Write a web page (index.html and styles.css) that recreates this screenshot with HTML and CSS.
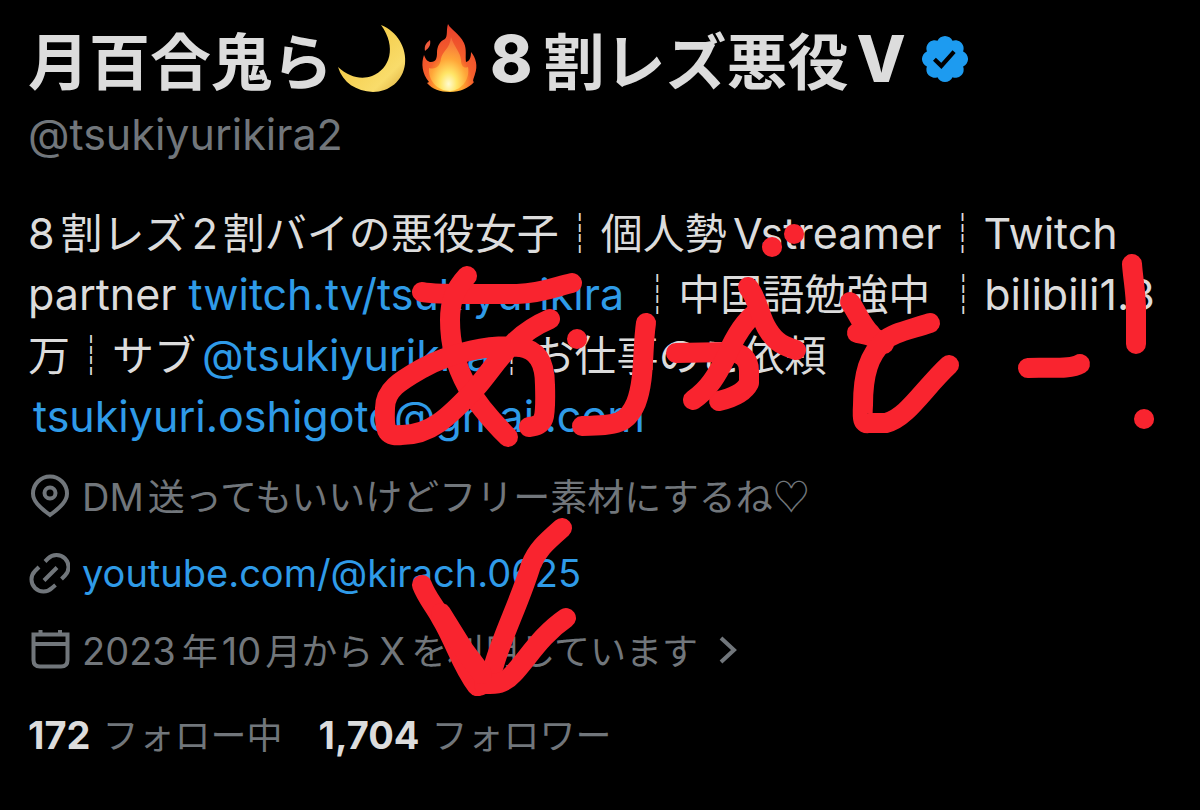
FILE: index.html
```html
<!DOCTYPE html>
<html lang="ja">
<head>
<meta charset="utf-8">
<meta name="viewport" content="width=device-width, initial-scale=1">
<title>月百合鬼ら (@tsukiyurikira2)</title>
<link rel="stylesheet" href="styles.css">
</head>
<body>
<main class="profile">
  <h1 class="name">
    <span>月百合鬼ら</span>
    <svg class="emoji moon" viewBox="0 0 72 72" role="img" aria-label="三日月">
      <defs><linearGradient id="moonFill" x1="0" y1="0" x2="1" y2="1"><stop offset="0.4" stop-color="#f5cf4f"/><stop offset="0.75" stop-color="#f9dc6b"/><stop offset="1" stop-color="#d9a838"/></linearGradient></defs>
      <path fill="url(#moonFill)" d="M45 2C61 8 71 25 69 41C67 58 53 69 37 69C20 68 7 60 2 44C13 54 25 57 36 53C54 46 61 24 45 2Z"/>
    </svg>
    <svg class="emoji fire" viewBox="0 0 58 72" role="img" aria-label="炎">
      <defs>
        <radialGradient id="fireFill" cx="0.5" cy="0.87" r="0.85"><stop offset="0" stop-color="#ffd84a"/><stop offset="0.3" stop-color="#ffa32e"/><stop offset="0.5" stop-color="#f5602c"/><stop offset="1" stop-color="#e8402c"/></radialGradient>
        <radialGradient id="fireCore" cx="0.5" cy="0.87" r="0.85"><stop offset="0" stop-color="#fffbd0"/><stop offset="0.25" stop-color="#ffe566"/><stop offset="0.55" stop-color="#ffa638"/><stop offset="1" stop-color="#f56a3c"/></radialGradient>
      </defs>
      <path fill="url(#fireFill)" d="M28 1C31 7 39 10 44 20C47 27 45 33 46 39C50 38 51 34 51 29C56 35 58 43 55 51C54 55 52 58 54 59C49 65 40 69 30 69C20 69 12 66 7 60L9 59C2 51 1 40 4 32C6 37 8 39 11 39C16 39 17 35 17 30C17 23 20 18 25 16C28 13 26 7 28 1Z"/>
      <path fill="#ee5a3c" d="M10 17C11 22 9 25 5 28C4 23 6 20 10 17Z"/>
      <path fill="url(#fireCore)" d="M31 14C34 24 40 28 41 37C41 43 44 46 48 44C50 55 43 67 30 68C17 68 8 57 9 45C16 47 20 43 21 36C22 28 30 26 31 14Z"/>
    </svg>
    <span class="digit">8</span>
    <span>割レズ悪役</span>
    <span class="initial">V</span>
    <svg class="badge" viewBox="0 0 22 22" role="img" aria-label="認証済み">
      <path fill="#1d9bf0" d="M20.396 11c-.018-.646-.215-1.275-.57-1.816-.354-.54-.852-.972-1.438-1.246.223-.607.27-1.264.14-1.897-.131-.634-.437-1.218-.882-1.687-.47-.445-1.053-.75-1.687-.882-.633-.13-1.29-.083-1.897.14-.273-.587-.704-1.086-1.245-1.44S11.647 1.62 11 1.604c-.646.017-1.273.213-1.813.568s-.969.854-1.24 1.44c-.608-.223-1.267-.272-1.902-.14-.635.13-1.22.436-1.69.882-.445.47-.749 1.055-.878 1.688-.13.633-.08 1.29.144 1.896-.587.274-1.087.705-1.443 1.245-.356.54-.555 1.17-.574 1.817.02.647.218 1.276.574 1.817.356.54.856.972 1.443 1.245-.224.606-.274 1.263-.144 1.896.13.634.433 1.218.877 1.688.47.443 1.054.747 1.687.878.633.132 1.29.084 1.897-.136.274.586.705 1.084 1.246 1.439.54.354 1.17.551 1.816.569.647-.016 1.276-.213 1.817-.567s.972-.854 1.245-1.44c.604.239 1.266.296 1.903.164.636-.132 1.22-.447 1.68-.907.46-.46.776-1.044.908-1.681s.075-1.299-.165-1.903c.586-.274 1.084-.705 1.439-1.246.354-.54.551-1.17.569-1.816z"/>
      <path fill="none" stroke="#000" stroke-width="1.7" d="M6.7 11.1l2.8 2.7L14.7 8"/>
    </svg>
  </h1>
  <p class="handle">@tsukiyurikira2</p>
  <p class="bio"><span class="latin lead">8</span>割レズ<span class="latin num">2</span>割バイの悪役女子┊個人勢<span class="latin word">Vstreamer</span>┊<span class="latin">Twitch</span><br><span class="latin">partner <a href="#">twitch.tv/tsukiyurikira</a> </span>┊中国語勉強中<span class="latin"> </span>┊<span class="latin">bilibili1.3</span><br>万┊サブ<a class="latin mention" href="#">@tsukiyurikira</a>┊お仕事のご依頼<br><a class="latin mail" href="#">tsukiyuri.oshigoto@gmail.com</a></p>
  <ul class="details">
    <li>
      <svg class="icon" viewBox="0 0 42 44" aria-hidden="true"><path d="M22 41C11 33 5 27 5 19.500a17 17 0 0 1 34 0C39 27 33 33 22 41Z"/><circle cx="22" cy="19" r="5.500"/></svg>
      <span class="place"><span class="latin dm">DM</span>送ってもいいけどフリー素材にするね♡</span>
    </li>
    <li>
      <svg class="icon" viewBox="0 0 42 44" aria-hidden="true"><path d="M17 10.500L20 7.500a12 12 0 0 1 17 17L33.500 28M27.500 34L24 37A12 12 0 0 1 7 20L11 16M16 29.500L29 16.500"/></svg>
      <a class="latin" href="#">youtube.com/@kirach.0625</a>
    </li>
    <li>
      <button class="joined" type="button">
        <svg class="icon" viewBox="0 0 42 44" aria-hidden="true"><path d="M5.500 6.500H39.500V32Q39.500 38.500 33 38.500H12Q5.500 38.500 5.500 32ZM5.500 16H39.500M12.500 2V7M32 2V7"/></svg>
        <span><span class="latin year">2023</span>年<span class="latin month">10</span>月から<span class="latin x">X</span>を利用しています</span>
        <svg class="chevron" viewBox="0 0 20 30" aria-hidden="true"><path d="M3 3L16 15L3 27"/></svg>
      </button>
    </li>
  </ul>
  <div class="counts">
    <a href="#"><strong>172</strong> <span>フォロー中</span></a>
    <a href="#"><strong>1,704</strong> <span>フォロワー</span></a>
  </div>
  <svg class="scribble" viewBox="0 0 1200 810" role="img" aria-label="手書き：ありがとー！">
    <path d="M422 292C435 295 475 294 517 294C545 293 557 286 572 283"/>
    <path d="M467 276C454 290 450 303 450 320C450 372 476 405 508 437"/>
    <path d="M550 319C510 336 497 364 476 388C448 418 430 435 402 435C388 436 384 434 385 408C385 390 400 381 421 369C451 352 492 344 520 347C538 350 545 363 545 385C546 420 545 425 529 427"/>
    <path d="M577 339h.1M646 323C642 350 645 380 636 403C627 424 618 425 582 426"/>
    <path d="M676 353L728 352C743 352 749 360 749 371V383C744 393 732 398 719 401"/>
    <path d="M693 400C709 389 717 375 726 357C735 336 744 321 757 312"/>
    <path d="M748 287C759 300 759 317 768 330C776 343 784 346 796 350M772 247h.1M794 234h.1"/>
    <path d="M850 302C857 312 862 326 871 334M857 333C868 335 876 337 884 344"/>
    <path d="M930 323C905 331 893 333 884 341C869 355 863 374 863 405C862 420 863 424 869 423L886 423C907 418 924 388 949 365"/>
    <path d="M1028 368C1047 367 1070 370 1080 364"/>
    <path d="M1132 264C1133 279 1136 292 1136 310V344M1144 419h.1"/>
    <path d="M422 585C427 598 434 605 441 618C455 641 461 665 477 686"/>
    <path d="M562 528C545 543 537 550 531 565C520 601 503 634 494 665C490 677 486 685 478 686"/>
    <path d="M566 618C541 635 528 658 513 674C504 684 497 684 484 684"/>
    <path d="M441 613L464 650L482 674"/>
  </svg>
</main>
</body>
</html>
```
FILE: styles.css
```css
* { box-sizing: border-box; }

body {
  margin: 0;
  background: #000;
  color: #dcdcdc;
  font-family: "Noto Sans CJK JP", sans-serif;
}

.profile {
  position: relative;
  padding: 20px 28px 40px;
}

a { color: #2f9be8; text-decoration: none; }

.latin { font-family: Inter, sans-serif; font-size: 43px; }

.name {
  display: flex;
  align-items: center;
  margin: 0;
  height: 78px;
  font-size: 61px;
  line-height: 74px;
  font-weight: 700;
  white-space: nowrap;
}

.emoji { flex: none; height: 72px; }
.moon { width: 72px; margin-left: 3px; }
.fire { width: 58px; margin-left: 12px; }

.digit, .initial {
  font-family: Inter, sans-serif;
  font-size: 64px;
  font-weight: 800;
}
.digit { margin: 0 11px 0 12px; }
.initial { margin: 0 12px 0 8px; }

.badge { flex: none; width: 54px; height: 54px; }

.handle {
  margin: 8px 0 0;
  color: #71767b;
  font-family: Inter, sans-serif;
  font-size: 43px;
  line-height: 56px;
}

.bio {
  margin: 38px 0 0;
  font-size: 42px;
  line-height: 61px;
  white-space: nowrap;
}
.bio .latin { line-height: 1; }
.lead { margin-right: 6px; }
.num { margin: 0 5px; }
.word { margin-left: 6px; }
.mention { margin-left: 6px; }
.mail { margin-left: 5px; }

.details {
  margin: 13px 0 0;
  padding: 0;
  list-style: none;
  color: #71767b;
  font-size: 36px;
}
.details li, .joined {
  display: flex;
  align-items: center;
  gap: 12px;
  height: 77px;
  line-height: 77px;
  white-space: nowrap;
}
.details .latin { font-size: 38px; line-height: 1; }
.place { font-size: 37px; }
.joined {
  padding: 0;
  border: 0;
  background: none;
  color: inherit;
  font: inherit;
}
.icon { flex: none; width: 42px; height: 44px; }
.icon path, .icon circle, .chevron path {
  fill: none;
  stroke: #71767b;
  stroke-width: 4;
}
.chevron { width: 20px; height: 30px; margin-left: 8px; }
.dm { margin-right: 4px; }
.year { margin-right: 6px; }
.month { margin: 0 4px; }
.x { margin: 0 6px; }

.counts {
  display: flex;
  gap: 36px;
  margin-top: 15px;
  font-size: 36px;
  line-height: 60px;
  white-space: nowrap;
}
.counts a { color: #71767b; }
.counts strong {
  margin-right: 4px;
  color: #dcdcdc;
  font-family: Inter, sans-serif;
  font-size: 38px;
  font-weight: 700;
  line-height: 1;
}

.scribble {
  position: absolute;
  top: 0;
  left: 0;
  width: 1200px;
  height: 810px;
  pointer-events: none;
}
.scribble path {
  fill: none;
  stroke: #f9242f;
  stroke-width: 20;
  stroke-linecap: round;
  stroke-linejoin: round;
}
```
